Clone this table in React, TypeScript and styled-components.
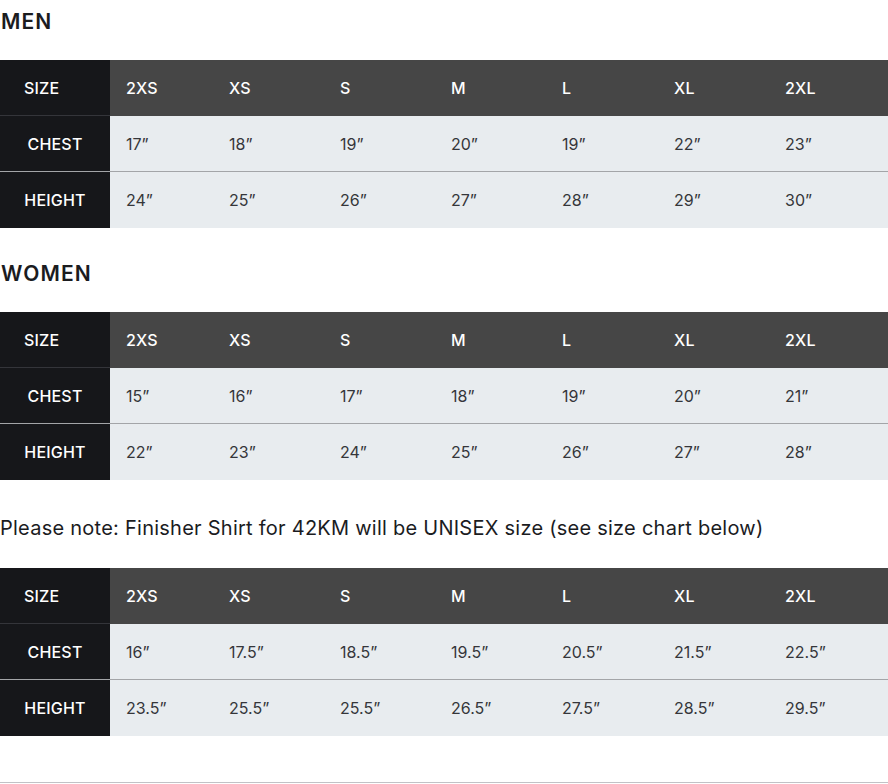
import React from "react";
import styled, { createGlobalStyle } from "styled-components";

const GlobalStyle = createGlobalStyle`
  html, body { margin: 0; padding: 0; background: #ffffff; }
  body { font-family: Inter, "Noto Sans", "Liberation Sans", sans-serif; color: #1b1c1f; }
`;

const Page = styled.div`
  width: 888px;
  padding-top: 8px;
  display: flex;
  flex-direction: column;
`;

const Heading = styled.h2<{ $top?: number }>`
  margin: ${(p) => p.$top ?? 0}px 0 25px 0;
  padding: 1px 0 0 1px;
  font-size: 21px;
  line-height: 26px;
  font-weight: 600;
  letter-spacing: 1.1px;
  color: #1b1c1f;
`;

const Note = styled.p`
  margin: 34px 0 26px 0;
  font-size: 20px;
  line-height: 28px;
  font-weight: 400;
  letter-spacing: 0.25px;
  color: #1b1c1f;
`;

const Table = styled.div`
  display: grid;
  grid-template-columns: 110px 103px 111px 111px 111px 112px 111px 1fr;
  font-size: 16px;
`;

const RowLabel = styled.div<{ $head?: boolean; $sep?: boolean }>`
  height: 56px;
  box-sizing: border-box;
  background: #16171a;
  color: #ffffff;
  font-weight: 500;
  letter-spacing: 0.2px;
  display: flex;
  align-items: center;
  justify-content: ${(p) => (p.$head ? "flex-start" : "center")};
  padding-left: ${(p) => (p.$head ? "24px" : "0")};
  border-bottom: 1px solid ${(p) => (p.$head ? "#34353a" : p.$sep ? "#a3a5a8" : "transparent")};
`;

const HeadCell = styled.div`
  height: 56px;
  box-sizing: border-box;
  background: #464646;
  color: #ffffff;
  font-weight: 500;
  letter-spacing: 0.2px;
  display: flex;
  align-items: center;
  padding-left: 16px;
`;

const Cell = styled.div<{ $sep?: boolean }>`
  height: 56px;
  box-sizing: border-box;
  background: #e8ecef;
  color: #35363a;
  font-weight: 400;
  display: flex;
  align-items: center;
  padding-left: 16px;
  border-bottom: 1px solid ${(p) => (p.$sep ? "#a3a5a8" : "transparent")};
`;

const Rule = styled.hr`
  margin: 46px 0 0 0;
  border: none;
  border-top: 1px solid #c2c2c6;
  height: 0;
`;

const SIZES = ["2XS", "XS", "S", "M", "L", "XL", "2XL"];

type Chart = { chest: string[]; height: string[] };

const men: Chart = {
  chest: ["17", "18", "19", "20", "19", "22", "23"],
  height: ["24", "25", "26", "27", "28", "29", "30"],
};
const women: Chart = {
  chest: ["15", "16", "17", "18", "19", "20", "21"],
  height: ["22", "23", "24", "25", "26", "27", "28"],
};
const unisex: Chart = {
  chest: ["16", "17.5", "18.5", "19.5", "20.5", "21.5", "22.5"],
  height: ["23.5", "25.5", "25.5", "26.5", "27.5", "28.5", "29.5"],
};

function SizeTable({ data }: { data: Chart }) {
  return (
    <Table>
      <RowLabel $head>SIZE</RowLabel>
      {SIZES.map((s) => (
        <HeadCell key={s}>{s}</HeadCell>
      ))}
      <RowLabel $sep>CHEST</RowLabel>
      {data.chest.map((v, i) => (
        <Cell key={"c" + i} $sep>
          {v}”
        </Cell>
      ))}
      <RowLabel>HEIGHT</RowLabel>
      {data.height.map((v, i) => (
        <Cell key={"h" + i}>{v}”</Cell>
      ))}
    </Table>
  );
}

export default function App() {
  return (
    <>
      <GlobalStyle />
      <Page>
        <Heading>MEN</Heading>
        <SizeTable data={men} />
        <Heading $top={32}>WOMEN</Heading>
        <SizeTable data={women} />
        <Note>Please note: Finisher Shirt for 42KM will be UNISEX size (see size chart below)</Note>
        <SizeTable data={unisex} />
        <Rule />
      </Page>
    </>
  );
}
